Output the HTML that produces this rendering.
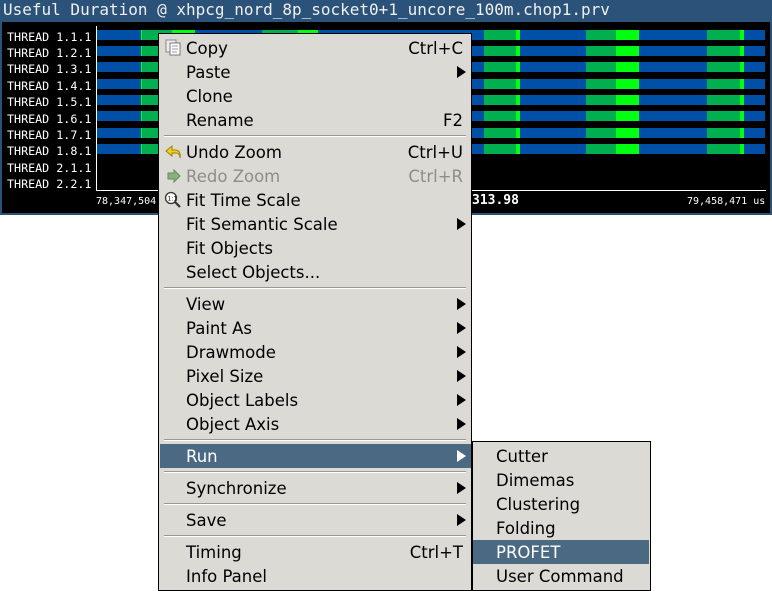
<!DOCTYPE html>
<html><head><meta charset="utf-8"><style>
body{margin:0;width:772px;height:591px;background:#fff;position:relative;overflow:hidden;font-family:"DejaVu Sans","Liberation Sans",sans-serif}
#title{position:absolute;left:0;top:0;width:772px;height:20px;background:#2b5279;color:#f0f0f0;font:16px "DejaVu Sans Mono","Liberation Mono",monospace;line-height:19px;padding-left:3px;box-sizing:border-box;white-space:nowrap}
#win{position:absolute;left:0;top:20px;width:772px;height:195px;background:#2b5279}
#plot{position:absolute;left:2px;top:2px;width:768px;height:191px;background:#000}
.lab{position:absolute;left:7px;color:#fff;font:11.7px "DejaVu Sans Mono",monospace;line-height:12px}
.row{position:absolute;left:97px;width:668px;height:10px;background:#0050a8}
.row i{position:absolute;top:0;height:10px}
.g{background:#00b050}.b{background:#00ff10}
.ax{position:absolute;color:#fff;font:10px "DejaVu Sans Mono",monospace}
#menu{position:absolute;left:158px;top:33px;width:312px;height:556px;background:#dcdad5;border:1px solid #000}
.it{position:absolute;left:1px;width:311px;height:24px;font-size:16.5px;line-height:26px;color:#000}
.it span.t{position:absolute;left:26px}
.it span.k{position:absolute;right:8px}
.it .ar{position:absolute;right:5px;top:6px;width:0;height:0;border-left:9px solid #000;border-top:6px solid transparent;border-bottom:6px solid transparent}
.hl{background:#4b6983;color:#fff}
.hl .ar{border-left-color:#fff}
.dis{color:#8f8d89}
.sep{position:absolute;left:5px;width:302px;height:0;border-top:1px solid #9a9893;border-bottom:1px solid #fff}
#sub{position:absolute;left:472px;top:441px;width:177px;height:148px;background:#dcdad5;border:1px solid #000}
#sub .it{width:176px;left:0}
#sub .it span.t{left:23px}
.ic{position:absolute;left:4px;top:3px}
</style></head><body>
<div id="title">Useful Duration @ xhpcg_nord_8p_socket0+1_uncore_100m.chop1.prv</div>
<div id="win"><div id="plot"></div></div>
<div class="lab" style="top:31px">THREAD 1.1.1</div>
<div class="lab" style="top:47px">THREAD 1.2.1</div>
<div class="lab" style="top:63px">THREAD 1.3.1</div>
<div class="lab" style="top:80px">THREAD 1.4.1</div>
<div class="lab" style="top:96px">THREAD 1.5.1</div>
<div class="lab" style="top:113px">THREAD 1.6.1</div>
<div class="lab" style="top:129px">THREAD 1.7.1</div>
<div class="lab" style="top:145px">THREAD 1.8.1</div>
<div class="lab" style="top:162px">THREAD 2.1.1</div>
<div class="lab" style="top:178px">THREAD 2.2.1</div>
<div style="position:absolute;left:96px;top:26px;width:1px;height:165px;background:#fff"></div>
<div style="position:absolute;left:96px;top:190px;width:670px;height:1px;background:#fff"></div>
<div id="rows"></div>
<script>
var tops=[30,46,62,79,95,111,128,144],h='';
tops.forEach(function(t,i){h+='<div class="row" style="top:'+t+'px"><i class="b" style="left:44px;width:1px"></i><i class="g" style="left:45px;width:30px"></i><i class="b" style="left:75px;width:23px"></i><i class="g" style="left:165px;width:36px"></i><i class="b" style="left:201px;width:20px"></i><i class="g" style="left:387px;width:32px"></i><i class="b" style="left:419px;width:4px"></i><i class="g" style="left:489px;width:30px"></i><i class="b" style="left:519px;width:23px"></i><i class="g" style="left:610px;width:33px"></i><i class="b" style="left:643px;width:4px"></i></div>';});
document.getElementById('rows').innerHTML=h;
</script>
<div class="ax" style="left:96px;top:196px">78,347,504</div>
<div class="ax" style="left:472px;top:193px;font-size:13px;font-weight:bold">313.98</div>
<div class="ax" style="left:687px;top:196px">79,458,471 us</div>
<div id="menu">
<div class="it" style="top:2px"><svg class="ic" width="18" height="18"><rect x="2" y="1" width="10" height="12" fill="#eee" stroke="#888"/><rect x="6" y="4" width="10" height="12" fill="#fff" stroke="#777"/><path d="M8 7h6M8 10h6M8 13h5" stroke="#999"/></svg><span class="t">Copy</span><span class="k">Ctrl+C</span></div>
<div class="it" style="top:26px"><span class="t">Paste</span><i class="ar"></i></div>
<div class="it" style="top:50px"><span class="t">Clone</span></div>
<div class="it" style="top:74px"><span class="t">Rename</span><span class="k">F2</span></div>
<div class="sep" style="top:101px"></div>
<div class="it" style="top:106px"><svg class="ic" width="18" height="18"><path d="M8 3L2 8l6 5V10h4c3 0 4 2 4 5c1-5-1-8-5-8H8z" fill="#f0d020" stroke="#a08000"/></svg><span class="t">Undo Zoom</span><span class="k">Ctrl+U</span></div>
<div class="it dis" style="top:130px"><svg class="ic" width="18" height="18"><path d="M10 3l6 6-6 6v-3H4V6h6z" fill="#8ab080" stroke="#6a8a60"/></svg><span class="t">Redo Zoom</span><span class="k">Ctrl+R</span></div>
<div class="it" style="top:154px"><svg class="ic" width="18" height="18"><circle cx="7" cy="7" r="5.5" fill="#fff" stroke="#333" stroke-width="1.3"/><path d="M11 11l5 5" stroke="#333" stroke-width="2.2"/><text x="3.5" y="9.5" font-size="6" font-family="DejaVu Sans">1:1</text></svg><span class="t">Fit Time Scale</span></div>
<div class="it" style="top:178px"><span class="t">Fit Semantic Scale</span><i class="ar"></i></div>
<div class="it" style="top:202px"><span class="t">Fit Objects</span></div>
<div class="it" style="top:226px"><span class="t">Select Objects...</span></div>
<div class="sep" style="top:253px"></div>
<div class="it" style="top:258px"><span class="t">View</span><i class="ar"></i></div>
<div class="it" style="top:282px"><span class="t">Paint As</span><i class="ar"></i></div>
<div class="it" style="top:306px"><span class="t">Drawmode</span><i class="ar"></i></div>
<div class="it" style="top:330px"><span class="t">Pixel Size</span><i class="ar"></i></div>
<div class="it" style="top:354px"><span class="t">Object Labels</span><i class="ar"></i></div>
<div class="it" style="top:378px"><span class="t">Object Axis</span><i class="ar"></i></div>
<div class="sep" style="top:405px"></div>
<div class="it hl" style="top:410px"><span class="t">Run</span><i class="ar"></i></div>
<div class="sep" style="top:437px"></div>
<div class="it" style="top:442px"><span class="t">Synchronize</span><i class="ar"></i></div>
<div class="sep" style="top:469px"></div>
<div class="it" style="top:474px"><span class="t">Save</span><i class="ar"></i></div>
<div class="sep" style="top:501px"></div>
<div class="it" style="top:506px"><span class="t">Timing</span><span class="k">Ctrl+T</span></div>
<div class="it" style="top:530px"><span class="t">Info Panel</span></div>
</div>
<div id="sub">
<div class="it" style="top:2px"><span class="t">Cutter</span></div>
<div class="it" style="top:26px"><span class="t">Dimemas</span></div>
<div class="it" style="top:50px"><span class="t">Clustering</span></div>
<div class="it" style="top:74px"><span class="t">Folding</span></div>
<div class="it hl" style="top:98px"><span class="t">PROFET</span></div>
<div class="it" style="top:122px"><span class="t">User Command</span></div>
</div>
</body></html>
